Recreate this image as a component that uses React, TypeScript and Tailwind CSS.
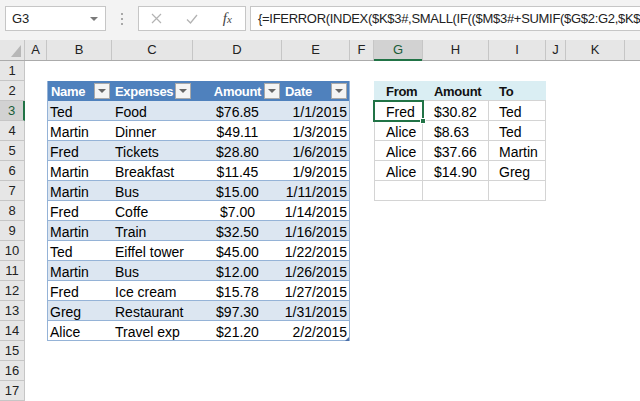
import React from 'react';

const cols = [
    { id: 'A', w: 22 },
    { id: 'B', w: 65 },
    { id: 'C', w: 81 },
    { id: 'D', w: 89 },
    { id: 'E', w: 68 },
    { id: 'F', w: 24 },
    { id: 'G', w: 49 },
    { id: 'H', w: 66 },
    { id: 'I', w: 57 },
    { id: 'J', w: 20 },
    { id: 'K', w: 59 },
    { id: 'L', w: 40 },
];

const expenses = [
    ['Ted', 'Food', '$76.85', '1/1/2015'],
    ['Martin', 'Dinner', '$49.11', '1/3/2015'],
    ['Fred', 'Tickets', '$28.80', '1/6/2015'],
    ['Martin', 'Breakfast', '$11.45', '1/9/2015'],
    ['Martin', 'Bus', '$15.00', '1/11/2015'],
    ['Fred', 'Coffe', '$7.00', '1/14/2015'],
    ['Martin', 'Train', '$32.50', '1/16/2015'],
    ['Ted', 'Eiffel tower', '$45.00', '1/22/2015'],
    ['Martin', 'Bus', '$12.00', '1/26/2015'],
    ['Fred', 'Ice cream', '$15.78', '1/27/2015'],
    ['Greg', 'Restaurant', '$97.30', '1/31/2015'],
    ['Alice', 'Travel exp', '$21.20', '2/2/2015'],
];

const transfers = [
    ['Fred', '$30.82', 'Ted'],
    ['Alice', '$8.63', 'Ted'],
    ['Alice', '$37.66', 'Martin'],
    ['Alice', '$14.90', 'Greg'],
    ['', '', ''],
];

const rows = Array.from({ length: 17 }, (_, i) => i + 1);

function FilterButton() {
    return (
        <div className="absolute right-[2px] top-[2px] w-[16px] h-[16px] bg-[#f4f4f4] border border-[#a9a9a9] flex items-center justify-center">
            <svg width="8" height="4" viewBox="0 0 8 4">
                <path d="M0 0 H8 L4 4 Z" fill="#666666" />
            </svg>
        </div>
    );
}

function FormulaBar() {
    return (
        <div className="h-[40px] bg-[#f3f3f3] flex items-start pt-[6px] pl-[5px]">
            <div className="w-[101px] h-[25px] bg-white border border-[#c6c6c6] flex items-center justify-between pl-[6px] pr-[7px]">
                <span className="text-[13px] text-[#222]">G3</span>
                <svg width="8" height="4" viewBox="0 0 8 4">
                    <path d="M0 0 H8 L4 4 Z" fill="#7a7a7a" />
                </svg>
            </div>
            <div className="w-[32px] h-[25px] flex flex-col items-center justify-center gap-[3px]">
                <span className="w-[2px] h-[2px] bg-[#a8a8a8]" />
                <span className="w-[2px] h-[2px] bg-[#a8a8a8]" />
                <span className="w-[2px] h-[2px] bg-[#a8a8a8]" />
            </div>
            <div className="w-[108px] h-[25px] bg-white border border-[#c6c6c6] flex items-center">
                <div className="w-[36px] flex justify-center">
                    <svg width="11" height="11" viewBox="0 0 11 11">
                        <path d="M1 1 L10 10 M10 1 L1 10" stroke="#b3b3b3" strokeWidth="1.2" />
                    </svg>
                </div>
                <div className="w-[36px] flex justify-center">
                    <svg width="12" height="10" viewBox="0 0 12 10">
                        <path d="M1 5.5 L4.5 9 L11 1" stroke="#b3b3b3" strokeWidth="1.3" fill="none" />
                    </svg>
                </div>
                <div className="w-[36px] flex justify-center">
                    <span className="font-['Liberation_Serif',serif] italic text-[15px] text-[#444] leading-none">
                        f<span className="text-[11px]">x</span>
                    </span>
                </div>
            </div>
            <div className="ml-[4px] flex-1 h-[25px] bg-white border border-r-0 border-[#c6c6c6] flex items-center pl-[7px] overflow-hidden whitespace-nowrap">
                <span className="text-[13px] tracking-[-0.3px] text-[#222]">
                    {'{=IFERROR(INDEX($K$3#,SMALL(IF(($M$3#+SUMIF($G$2:G2,$K$3#))<$M$3#,ROW($K$3#)-2),1)),"")}'}
                </span>
            </div>
        </div>
    );
}

function ColumnHeaders() {
    return (
        <div className="flex h-[21px] bg-[#e6e6e6] border-b border-[#ababab]">
            <div className="w-[25px] shrink-0 border-r border-[#c6c6c6] flex items-end justify-end pr-[3px] pb-[3px]">
                <svg width="10" height="12" viewBox="0 0 10 12">
                    <path d="M10 0 V12 H0 Z" fill="#b7b7b7" />
                </svg>
            </div>
            {cols.map((c) => (
                <div
                    key={c.id}
                    style={{ width: c.w }}
                    className={`shrink-0 relative border-r border-[#c6c6c6] flex items-center justify-center text-[13px] ${c.id === 'G' ? 'bg-[#d2d2d2] text-[#185c37]' : 'text-[#222]'}`}
                >
                    {c.id !== 'L' && c.id}
                    {c.id === 'G' && <span className="absolute left-0 right-0 bottom-[-1px] h-[2px] bg-[#217346]" />}
                </div>
            ))}
        </div>
    );
}

function ExpenseTable() {
    return (
        <div className="col-[2/6] row-[2/15] relative flex flex-col border-l border-r border-[#95b3d7]">
            <div className="h-[20px] flex bg-[#4f81bd] text-white font-bold text-[13px] tracking-[-0.3px] leading-[22px]">
                <div className="w-[64px] relative pl-[3px]">
                    Name
                    <FilterButton />
                </div>
                <div className="w-[81px] relative pl-[3px]">
                    Expenses
                    <FilterButton />
                </div>
                <div className="w-[89px] relative text-center">
                    Amount
                    <FilterButton />
                </div>
                <div className="w-[67px] relative pl-[3px]">
                    Date
                    <FilterButton />
                </div>
            </div>
            {expenses.map((r, i) => (
                <div
                    key={i}
                    className={`h-[20px] flex border-b border-[#95b3d7] leading-[22px] ${i % 2 === 0 ? 'bg-[#dce6f1]' : 'bg-white'}`}
                >
                    <div className="w-[64px] pl-[2px]">{r[0]}</div>
                    <div className="w-[81px] pl-[3px]">{r[1]}</div>
                    <div className="w-[89px] text-center">{r[2]}</div>
                    <div className="w-[67px] text-right pr-[2px]">{r[3]}</div>
                </div>
            ))}
            <svg className="absolute right-0 bottom-0" width="4" height="4" viewBox="0 0 4 4">
                <path d="M4 0 V4 H0 Z" fill="#4a6ea8" />
            </svg>
        </div>
    );
}

function TransferTable() {
    return (
        <div className="col-[7/10] row-[2/8] flex flex-col">
            <div className="h-[20px] flex bg-[#daeef3] border-b border-[#d4d4d4] font-bold text-[13px] tracking-[-0.3px] leading-[22px] text-[#111]">
                <div className="w-[49px] pl-[12px]">From</div>
                <div className="w-[66px] pl-[11px]">Amount</div>
                <div className="w-[57px] pl-[10px]">To</div>
            </div>
            {transfers.map((r, i) => (
                <div key={i} className="h-[20px] flex border-l border-b border-[#d4d4d4] leading-[22px]">
                    <div className="w-[48px] relative border-r border-[#d4d4d4] pl-[11px]">
                        {r[0]}
                        {i === 0 && (
                            <div className="absolute -left-[2px] -top-[1px] -right-[2px] -bottom-[2px] border-2 border-[#217346] z-10">
                                <span className="absolute -right-[4px] -bottom-[4px] w-[6px] h-[6px] bg-[#217346] border border-white" />
                            </div>
                        )}
                    </div>
                    <div className="w-[66px] border-r border-[#d4d4d4] pl-[11px]">{r[1]}</div>
                    <div className="w-[57px] border-r border-[#d4d4d4] pl-[10px]">{r[2]}</div>
                </div>
            ))}
        </div>
    );
}

export default function App() {
    return (
        <div className="w-[640px] h-[401px] overflow-hidden bg-white font-['Liberation_Sans',Arial,sans-serif] text-black text-[14px]">
            <FormulaBar />
            <ColumnHeaders />
            <div className="flex">
                <div className="w-[25px] shrink-0 bg-[#e6e6e6]">
                    {rows.map((n) => (
                        <div
                            key={n}
                            className={`h-[20px] flex items-center justify-center border-b text-[13px] ${n === 3 ? 'bg-[#d2d2d2] border-r-2 border-r-[#217346] border-b-[#c6c6c6] text-[#185c37]' : 'border-r border-[#c6c6c6] text-[#222]'}`}
                        >
                            {n}
                        </div>
                    ))}
                </div>
                <div className="flex-1 grid grid-cols-[22px_65px_81px_89px_68px_24px_49px_66px_57px_20px_59px_1fr] grid-rows-[repeat(17,20px)]">
                    <ExpenseTable />
                    <TransferTable />
                </div>
            </div>
        </div>
    );
}
